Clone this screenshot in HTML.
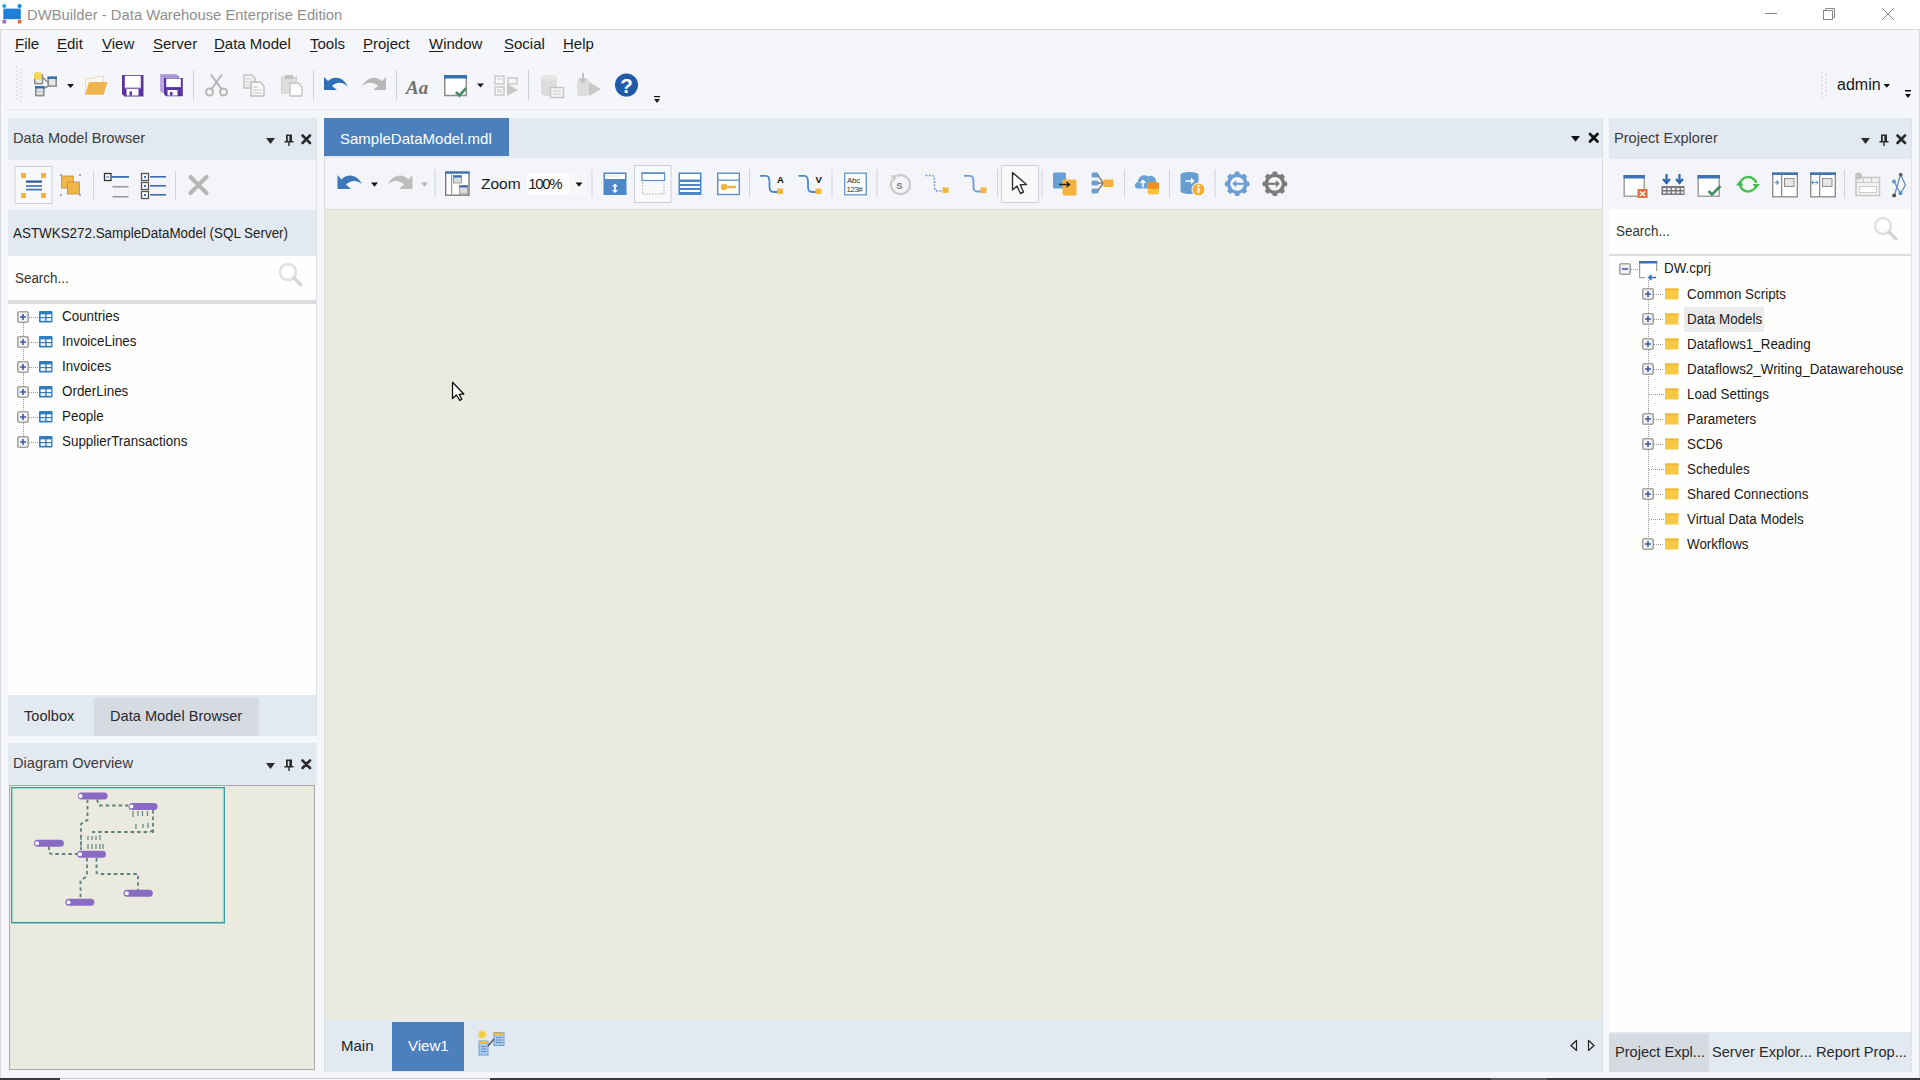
<!DOCTYPE html>
<html><head><meta charset="utf-8">
<style>
*{box-sizing:border-box;margin:0;padding:0}
html,body{width:1920px;height:1080px;overflow:hidden}
body{position:relative;background:#f4f6f9;font-family:"Liberation Sans",sans-serif;color:#1e1e1e}
.a{position:absolute}
.t{position:absolute;white-space:nowrap;line-height:1}
#titlebar{left:0;top:0;width:1920px;height:30px;background:#fff;border-bottom:1px solid #d6d6d6}
.menu span{position:absolute;top:36px;font-size:15px;white-space:nowrap;line-height:1;color:#1b1b1b}
.menu u{text-decoration:underline;text-underline-offset:1.5px;text-decoration-thickness:1px}
.phdr{background:#e3e9f1}
.ptitle{font-size:14.6px;color:#3c3c3c}
.tree{font-size:15.5px;color:#1a1a1a;transform:scaleX(.8645);transform-origin:0 0}
.canvas{background:#ebeadf}
</style></head><body>
<div id="titlebar" class="a"></div>
<div class="t" style="left:27px;top:8px;font-size:14.8px;color:#8f8f8f">DWBuilder - Data Warehouse Enterprise Edition</div>


<!-- title icon -->
<svg class="a" style="left:0;top:0" width="26" height="29">
<rect x="3.3" y="8.6" width="17.5" height="10.6" fill="#1e80d8"/>
<circle cx="4.3" cy="6" r="2.1" fill="#27a6da"/><circle cx="19.6" cy="6" r="2.1" fill="#1b86d4"/>
<circle cx="4.3" cy="21.7" r="2.1" fill="#9b70c6"/><circle cx="19.6" cy="21.7" r="2.1" fill="#e2703a"/>
</svg>
<!-- window controls -->
<svg class="a" style="left:1750px;top:0" width="170" height="29">
<line x1="15" y1="13.5" x2="27" y2="13.5" stroke="#8a8a8a" stroke-width="1"/>
<rect x="73.5" y="10.5" width="9" height="9" fill="none" stroke="#8a8a8a"/>
<path d="M75.5 10.5 V8.5 H84.5 V17.5 H82.5" fill="none" stroke="#8a8a8a"/>
<path d="M132 8 L144 20 M144 8 L132 20" stroke="#8a8a8a" stroke-width="1"/>
</svg>
<!-- main toolbar -->
<div class="a" style="left:4px;top:109px;width:658px;height:1px;background:#e6e9ed"></div>
<svg class="a" style="left:0;top:60px" width="700" height="50">
<g fill="#c9ccd1">
<circle cx="17" cy="7" r=".8"/><circle cx="21" cy="9" r=".8"/><circle cx="17" cy="11" r=".8"/><circle cx="21" cy="13" r=".8"/><circle cx="17" cy="15" r=".8"/><circle cx="21" cy="17" r=".8"/><circle cx="17" cy="19" r=".8"/><circle cx="21" cy="21" r=".8"/><circle cx="17" cy="23" r=".8"/><circle cx="21" cy="25" r=".8"/><circle cx="17" cy="27" r=".8"/><circle cx="21" cy="29" r=".8"/><circle cx="17" cy="31" r=".8"/><circle cx="21" cy="33" r=".8"/><circle cx="17" cy="35" r=".8"/><circle cx="21" cy="37" r=".8"/><circle cx="17" cy="39" r=".8"/><circle cx="21" cy="41" r=".8"/>
</g>
<!-- new model icon at 34,12 -->
<g transform="translate(34,12)">
<path d="M7 4 L14 10.5 M14.5 14 L9.5 16.5" stroke="#8c8c8c" stroke-width="1.6" fill="none"/>
<rect x="0.8" y="3" width="7.6" height="8.6" fill="#efefef" stroke="#8c8c8c" stroke-width="1.6"/>
<circle cx="3.8" cy="4" r="4" fill="#f3d652"/>
<rect x="14.2" y="5.5" width="8" height="8.6" fill="#e6e6e6" stroke="#8c8c8c" stroke-width="1.6"/>
<rect x="13.5" y="4.5" width="9.5" height="2.5" fill="#3b6eae"/>
<rect x="1.8" y="15" width="8" height="8.6" fill="#e6e6e6" stroke="#8c8c8c" stroke-width="1.6"/>
<rect x="1" y="14" width="9.5" height="2.5" fill="#3b6eae"/>
<rect x="3" y="19" width="5.5" height="1" fill="#bdbdbd"/>
</g>
<path d="M67 24 H74 L70.5 28 Z" fill="#1a1a1a"/>
<!-- folder 85,76 -->
<g transform="translate(85,16)">
<path d="M0.5 18.5 V2.5 H9 L11 0.5 H18.5 V7" fill="#fdf8ea" stroke="#e3c993" stroke-width="1" stroke-dasharray="1.2 .8"/>
<path d="M0 18.7 L4 6 H22.5 L18.5 18.7 Z" fill="#f0b54e"/>
</g>
<!-- save 122,75 -->
<g transform="translate(122,15)">
<path d="M0 0 H21.5 V21.5 H2.5 L0 19 Z" fill="#5b32a2"/>
<rect x="2.8" y="0.8" width="16" height="12" fill="#fff"/>
<rect x="2.8" y="12.5" width="16" height="1" fill="#b9a6dc"/>
<rect x="4.5" y="14" width="12" height="6.5" fill="#fff"/>
<rect x="7.5" y="16.5" width="2.5" height="4" fill="#5b32a2"/>
</g>
<!-- save all 160,74 -->
<g transform="translate(160,14)">
<path d="M0 0 H16 L19 3 V19 H2 L0 17 Z" fill="#b8a8dc"/>
<rect x="2" y="1.5" width="17" height="2" fill="#a08fd0"/>
<path d="M4 4 H22.8 V22.3 H6 L4 20 Z" fill="#5b32a2"/>
<rect x="6.2" y="4.6" width="14.6" height="8.5" fill="#fff"/>
<rect x="7.5" y="16" width="10" height="5.5" fill="#fff"/>
<rect x="10" y="18" width="2.5" height="3.5" fill="#5b32a2"/>
</g>
<rect x="193" y="10" width="1" height="30" fill="#cfd3d8"/>
<!-- scissors 205,73 -->
<g transform="translate(205,13)" stroke="#b6b6b6" fill="none" stroke-width="2">
<circle cx="4.5" cy="19" r="3.5"/><circle cx="18.5" cy="19" r="3.5"/>
<path d="M6.5 16 L17 1.5 M16.5 16 L6 1.5"/>
</g>
<!-- copy 243,74 -->
<g transform="translate(243,14)">
<path d="M1 1 H9 L12 4 V14 H1 Z" fill="#f2f2f2" stroke="#c2c2c2" stroke-width="1.4"/>
<path d="M3 5 H8 M3 8 H10 M3 11 H8" stroke="#cfcfcf" stroke-width="1"/>
<path d="M8 8 H17 L21 12 V22 H8 Z" fill="#fafafa" stroke="#bdbdbd" stroke-width="1.4"/>
<path d="M10 13 H15 M10 16 H19 M10 19 H19" stroke="#c6c6c6" stroke-width="1.2"/>
</g>
<!-- paste 281,74 -->
<g transform="translate(281,14)">
<rect x="0.5" y="3" width="15" height="16" fill="#dedede" stroke="#d0d0d0"/>
<rect x="4" y="1" width="8" height="4" fill="#c4c4c4"/>
<path d="M9 9 H17 L21 13 V22 H9 Z" fill="#fdfdfd" stroke="#c2c2c2" stroke-width="1.4"/>
</g>
<rect x="313" y="10" width="1" height="30" fill="#cfd3d8"/>
<!-- undo 323,77 -->
<path d="M324 17 L324 30 L337 30 L332 26 C337 21 344 22 348 27 C344 17 334 15 328 21 Z" fill="#2f6db6"/>
<!-- redo 362,77 -->
<path d="M386 17 L386 30 L373 30 L378 26 C373 21 366 22 362 27 C366 17 376 15 382 21 Z" fill="#b8b8b8"/>
<rect x="396" y="10" width="1" height="30" fill="#cfd3d8"/>
<text x="406" y="34" font-family="Liberation Serif" font-style="italic" font-weight="bold" font-size="19" fill="#727272">Aa</text>
<!-- window check 444,76 -->
<g transform="translate(444,15)">
<rect x="0.8" y="1" width="21.5" height="19.5" fill="#fff" stroke="#8d8d8d" stroke-width="1.5"/>
<rect x="0" y="0" width="23" height="3.5" fill="#3a6fb2"/>
<path d="M12 17 L15.5 20.5 L22 13" stroke="#3f8c5e" stroke-width="2.6" fill="none"/>
</g>
<path d="M477 23.5 H484 L480.5 27.5 Z" fill="#1a1a1a"/>
<!-- gray flow 494,75 -->
<g transform="translate(494,15)" fill="none" stroke="#c7c7c7" stroke-width="1.4">
<rect x="1" y="1" width="9" height="8"/><rect x="1" y="12" width="9" height="8"/>
<rect x="14" y="3" width="9" height="6"/>
<path d="M3 4 H8 M3 15 H8 M3 17 H8" stroke-width="1"/>
<path d="M13 9 L24 15 L13 21 Z" fill="#c6c6c6" stroke="none"/>
</g>
<rect x="528" y="10" width="1" height="30" fill="#cfd3d8"/>
<!-- db gray 541,74 -->
<g transform="translate(541,14)">
<path d="M0 4 C0 0 16 0 16 4 V19 C16 23 0 23 0 19 Z" fill="#dcdcdc"/>
<ellipse cx="8" cy="4" rx="8" ry="3" fill="#e6e6e6"/>
<rect x="9.5" y="13.5" width="13" height="10" fill="#f4f4f4" stroke="#c4c4c4" stroke-width="1.4"/>
<path d="M12 17 H20 M12 20 H20" stroke="#cacaca"/>
</g>
<!-- load gray 577,73 -->
<g transform="translate(577,13)">
<path d="M0 8 C0 5 12 5 12 8 V21 C12 24 0 24 0 21 Z" fill="#dedede"/>
<path d="M6 0 V9 M2.5 5.5 L6 9 L9.5 5.5" stroke="#c2c2c2" stroke-width="2" fill="none"/>
<path d="M12 9 L24 16 L12 23 Z" fill="#c9c9c9"/>
</g>
<!-- help 615,73 -->
<circle cx="626.5" cy="25" r="11.5" fill="#1f5aa7"/>
<text x="626.5" y="32.5" text-anchor="middle" font-family="Liberation Sans" font-weight="bold" font-size="20.5" fill="#fff">?</text>
<path d="M654 36 H660 V37.3 H654 Z M654 39 H660 L657 43 Z" fill="#1a1a1a"/>
</svg>
<!-- admin -->
<svg class="a" style="left:1815px;top:60px" width="105" height="50">
<g fill="#cfd2d6"><circle cx="7" cy="13" r=".8"/><circle cx="11" cy="15" r=".8"/><circle cx="7" cy="17" r=".8"/><circle cx="11" cy="19" r=".8"/><circle cx="7" cy="21" r=".8"/><circle cx="11" cy="23" r=".8"/><circle cx="7" cy="25" r=".8"/><circle cx="11" cy="27" r=".8"/><circle cx="7" cy="29" r=".8"/><circle cx="11" cy="31" r=".8"/><circle cx="7" cy="33" r=".8"/><circle cx="11" cy="35" r=".8"/><circle cx="7" cy="37" r=".8"/></g>
<path d="M68.5 24 H75 L71.75 27.8 Z" fill="#111"/>
<path d="M90 30 H96 V31.5 H90 Z M90 34 H96 L93 38 Z" fill="#111"/>
</svg>
<div class="t" style="left:1837px;top:76.5px;font-size:16px;color:#1a1a1a">admin</div>

<div class="menu">
<span style="left:15px"><u>F</u>ile</span>
<span style="left:57px"><u>E</u>dit</span>
<span style="left:102px"><u>V</u>iew</span>
<span style="left:153px"><u>S</u>erver</span>
<span style="left:214px"><u>D</u>ata Model</span>
<span style="left:310px"><u>T</u>ools</span>
<span style="left:363px"><u>P</u>roject</span>
<span style="left:429px"><u>W</u>indow</span>
<span style="left:504px"><u>S</u>ocial</span>
<span style="left:563px"><u>H</u>elp</span>
</div>

<!-- left panel -->
<div class="a phdr" style="left:8px;top:118px;width:309px;height:42px"></div>
<div class="t ptitle" style="left:13px;top:131px">Data Model Browser</div>
<div class="a" style="left:8px;top:160px;width:309px;height:50px;background:#f3f5f8"></div>
<div class="a phdr" style="left:8px;top:210px;width:309px;height:46px"></div>
<div class="t tree" style="left:13px;top:225px;color:#222">ASTWKS272.SampleDataModel (SQL Server)</div>
<div class="a" style="left:8px;top:256px;width:309px;height:44px;background:#fefefd"></div>
<div class="t tree" style="left:15px;top:270px;color:#333">Search...</div>
<div class="a" style="left:8px;top:300px;width:309px;height:4px;background:#dcdcdc"></div>
<div class="a" style="left:8px;top:304px;width:309px;height:391px;background:#fefefd"></div>
<div class="a phdr" style="left:8px;top:695px;width:309px;height:41px"></div>
<div class="a" style="left:94px;top:698px;width:165px;height:38px;background:#d6dbe2"></div>
<div class="t" style="left:24px;top:709px;font-size:14.6px;color:#2a2a2a">Toolbox</div>
<div class="t" style="left:110px;top:709px;font-size:14.6px;color:#2a2a2a">Data Model Browser</div>

<div class="a phdr" style="left:8px;top:743px;width:309px;height:42px"></div>
<div class="t ptitle" style="left:13px;top:756px">Diagram Overview</div>
<div class="a canvas" style="left:9px;top:785px;width:306px;height:285px;border:1px solid #a9a9a9"></div>


<!-- left panel toolbar -->
<svg class="a" style="left:8px;top:160px" width="309" height="50">
<rect x="7" y="6.5" width="37" height="37" fill="#f8f9fb" stroke="#cdd1d6"/>
<g fill="#f3b53f"><rect x="13" y="13" width="5" height="5"/><rect x="33" y="13" width="5" height="5"/><rect x="13" y="33" width="5" height="5"/><rect x="33" y="33" width="5" height="5"/></g>
<rect x="18" y="20.5" width="16" height="2.2" fill="#2d5a94"/>
<rect x="18" y="25.2" width="16" height="1.6" fill="#3f6fae"/>
<rect x="18" y="28.8" width="16" height="1.6" fill="#3f6fae"/>
<!-- icon2 -->
<g transform="translate(52,14)">
<rect x="1.5" y="2" width="12" height="12" fill="#f0b648" stroke="#b9914a" stroke-width=".8"/>
<rect x="7.5" y="8" width="12" height="12" fill="#f0b648" stroke="#b9914a" stroke-width=".8"/>
<g fill="#555"><circle cx="1" cy="1" r=".8"/><circle cx="20" cy="1" r=".8"/><circle cx="1" cy="21" r=".8"/><circle cx="20" cy="21" r=".8"/></g>
</g>
<rect x="85" y="10.5" width="1" height="29" fill="#cfd3d8"/>
<!-- icon3 -->
<rect x="96.5" y="13.5" width="6.5" height="7" fill="#fff" stroke="#333" stroke-width="1.3"/>
<rect x="98" y="16.5" width="3.5" height="1" fill="#3f6fae"/>
<rect x="104" y="16" width="17" height="1.8" fill="#3f6fae"/>
<rect x="104.5" y="26" width="16" height="1.5" fill="#9a9a9a"/>
<rect x="104.5" y="36" width="16" height="1.5" fill="#9a9a9a"/>
<!-- icon4 -->
<g fill="#fff" stroke="#555" stroke-width="1.3"><rect x="133.5" y="13.5" width="7" height="7"/><rect x="133.5" y="22.5" width="7" height="7"/><rect x="133.5" y="31.5" width="7" height="7"/></g>
<g fill="#3f6fae"><rect x="136" y="16" width="2" height="2"/><rect x="136" y="25" width="2" height="2"/><rect x="136" y="34" width="2" height="2"/>
<rect x="142" y="16" width="16" height="1.6"/><rect x="142" y="25" width="16" height="1.6"/><rect x="142" y="34" width="16" height="1.6"/></g>
<rect x="167" y="10.5" width="1" height="29" fill="#cfd3d8"/>
<path d="M182.5 17 L198.5 33 M198.5 17 L182.5 33" stroke="#b7b7b7" stroke-width="4.2" stroke-linecap="round"/>
</svg>
<!-- left tree -->
<svg class="a" style="left:8px;top:304px" width="60" height="160">
<g fill="none" stroke="#9b9b9b" stroke-width="1" stroke-dasharray="1 1">
<path d="M15.5 19 V132"/>
<path d="M21 13.5 H30 M21 38.5 H30 M21 63.5 H30 M21 88.5 H30 M21 113.5 H30 M21 138.5 H30"/>
</g>
<g id="lt">
</g>
</svg>
<svg class="a" style="left:17px;top:311px" width="37" height="13">
<rect x="0.8" y="0.8" width="10.4" height="10.4" rx="1.5" fill="#f4f4f4" stroke="#a3a3a3" stroke-width="1.6"/>
<path d="M3 6 H9 M6 3 V9" stroke="#3e5aa2" stroke-width="1.6"/>
<rect x="22" y="0" width="13.5" height="11.5" rx="1" fill="#2f7cc0"/>
<rect x="23.6" y="3.4" width="4.6" height="2.6" fill="#fff"/><rect x="29.6" y="3.4" width="4.6" height="2.6" fill="#fff"/>
<rect x="23.6" y="7.2" width="4.6" height="2.6" fill="#fff"/><rect x="29.6" y="7.2" width="4.6" height="2.6" fill="#fff"/>
</svg>
<div class="t tree" style="left:62px;top:308px">Countries</div>
<svg class="a" style="left:17px;top:336px" width="37" height="13">
<rect x="0.8" y="0.8" width="10.4" height="10.4" rx="1.5" fill="#f4f4f4" stroke="#a3a3a3" stroke-width="1.6"/>
<path d="M3 6 H9 M6 3 V9" stroke="#3e5aa2" stroke-width="1.6"/>
<rect x="22" y="0" width="13.5" height="11.5" rx="1" fill="#2f7cc0"/>
<rect x="23.6" y="3.4" width="4.6" height="2.6" fill="#fff"/><rect x="29.6" y="3.4" width="4.6" height="2.6" fill="#fff"/>
<rect x="23.6" y="7.2" width="4.6" height="2.6" fill="#fff"/><rect x="29.6" y="7.2" width="4.6" height="2.6" fill="#fff"/>
</svg>
<div class="t tree" style="left:62px;top:333px">InvoiceLines</div>
<svg class="a" style="left:17px;top:361px" width="37" height="13">
<rect x="0.8" y="0.8" width="10.4" height="10.4" rx="1.5" fill="#f4f4f4" stroke="#a3a3a3" stroke-width="1.6"/>
<path d="M3 6 H9 M6 3 V9" stroke="#3e5aa2" stroke-width="1.6"/>
<rect x="22" y="0" width="13.5" height="11.5" rx="1" fill="#2f7cc0"/>
<rect x="23.6" y="3.4" width="4.6" height="2.6" fill="#fff"/><rect x="29.6" y="3.4" width="4.6" height="2.6" fill="#fff"/>
<rect x="23.6" y="7.2" width="4.6" height="2.6" fill="#fff"/><rect x="29.6" y="7.2" width="4.6" height="2.6" fill="#fff"/>
</svg>
<div class="t tree" style="left:62px;top:358px">Invoices</div>
<svg class="a" style="left:17px;top:386px" width="37" height="13">
<rect x="0.8" y="0.8" width="10.4" height="10.4" rx="1.5" fill="#f4f4f4" stroke="#a3a3a3" stroke-width="1.6"/>
<path d="M3 6 H9 M6 3 V9" stroke="#3e5aa2" stroke-width="1.6"/>
<rect x="22" y="0" width="13.5" height="11.5" rx="1" fill="#2f7cc0"/>
<rect x="23.6" y="3.4" width="4.6" height="2.6" fill="#fff"/><rect x="29.6" y="3.4" width="4.6" height="2.6" fill="#fff"/>
<rect x="23.6" y="7.2" width="4.6" height="2.6" fill="#fff"/><rect x="29.6" y="7.2" width="4.6" height="2.6" fill="#fff"/>
</svg>
<div class="t tree" style="left:62px;top:383px">OrderLines</div>
<svg class="a" style="left:17px;top:411px" width="37" height="13">
<rect x="0.8" y="0.8" width="10.4" height="10.4" rx="1.5" fill="#f4f4f4" stroke="#a3a3a3" stroke-width="1.6"/>
<path d="M3 6 H9 M6 3 V9" stroke="#3e5aa2" stroke-width="1.6"/>
<rect x="22" y="0" width="13.5" height="11.5" rx="1" fill="#2f7cc0"/>
<rect x="23.6" y="3.4" width="4.6" height="2.6" fill="#fff"/><rect x="29.6" y="3.4" width="4.6" height="2.6" fill="#fff"/>
<rect x="23.6" y="7.2" width="4.6" height="2.6" fill="#fff"/><rect x="29.6" y="7.2" width="4.6" height="2.6" fill="#fff"/>
</svg>
<div class="t tree" style="left:62px;top:408px">People</div>
<svg class="a" style="left:17px;top:436px" width="37" height="13">
<rect x="0.8" y="0.8" width="10.4" height="10.4" rx="1.5" fill="#f4f4f4" stroke="#a3a3a3" stroke-width="1.6"/>
<path d="M3 6 H9 M6 3 V9" stroke="#3e5aa2" stroke-width="1.6"/>
<rect x="22" y="0" width="13.5" height="11.5" rx="1" fill="#2f7cc0"/>
<rect x="23.6" y="3.4" width="4.6" height="2.6" fill="#fff"/><rect x="29.6" y="3.4" width="4.6" height="2.6" fill="#fff"/>
<rect x="23.6" y="7.2" width="4.6" height="2.6" fill="#fff"/><rect x="29.6" y="7.2" width="4.6" height="2.6" fill="#fff"/>
</svg>
<div class="t tree" style="left:62px;top:433px">SupplierTransactions</div>

<!-- document -->
<div class="a phdr" style="left:324px;top:118px;width:1278px;height:40px"></div>
<div class="a" style="left:324px;top:118px;width:185px;height:38px;background:#4b80bc"></div>
<div class="t" style="left:340px;top:131px;font-size:15px;color:#fff">SampleDataModel.mdl</div>
<div class="a" style="left:325px;top:158px;width:1277px;height:51px;background:#f3f5f8"></div>
<div class="a canvas" style="left:325px;top:209px;width:1277px;height:811px"></div>
<div class="a phdr" style="left:325px;top:1020px;width:1277px;height:52px"></div>
<div class="a" style="left:392px;top:1022px;width:72px;height:49px;background:#4b80bc"></div>
<div class="t" style="left:341px;top:1038px;font-size:15px;color:#222">Main</div>
<div class="t" style="left:408px;top:1038px;font-size:15px;color:#fff">View1</div>


<!-- doc toolbar -->
<svg class="a" style="left:325px;top:158px" width="1000" height="51">
<!-- undo -->
<path d="M12.5 17 L12.5 31 L26 31 L21 26.5 C26 21.5 32 22 37 26 C32 16 22 15 16.5 21.5 Z" fill="#3f77b8"/>
<path d="M46 24.5 H53 L49.5 28.7 Z" fill="#111"/>
<path d="M87.5 17 L87.5 31 L74 31 L79 26.5 C74 21.5 68 22 63 26 C68 16 78 15 83.5 21.5 Z" fill="#bdbdbd"/>
<path d="M96 24.5 H103 L99.5 28.7 Z" fill="#b5b5b5"/>
<rect x="109.5" y="11.5" width="1" height="28" fill="#cfd3d8"/>
<!-- layout icon 445-470, 171.6-196 -->
<g transform="translate(120,13.5)">
<rect x="0.7" y="0.7" width="23.3" height="23" fill="#fff" stroke="#7a7a7a" stroke-width="1.4"/>
<rect x="0" y="0" width="24.5" height="2.2" fill="#3a6fb2"/>
<rect x="6" y="2" width="1.2" height="22" fill="#9a9a9a"/>
<rect x="8.5" y="4" width="8" height="7.5" fill="#dcdcdc" stroke="#8a8a8a" stroke-width=".8"/>
<rect x="8.5" y="4" width="8" height="2" fill="#3a6fb2"/>
<rect x="14.5" y="14" width="8" height="8.5" fill="#dcdcdc" stroke="#8a8a8a" stroke-width=".8"/>
<rect x="14.5" y="14" width="8" height="2" fill="#3a6fb2"/>
</g>
<text x="156" y="31" font-family="Liberation Sans" font-size="15.5" fill="#1a1a1a">Zoom</text>
<rect x="202" y="15" width="59" height="21.5" fill="#fdfdfd"/>
<rect x="244" y="15" width="17" height="21.5" fill="#f6f7f9"/>
<text x="203.2" y="31" font-family="Liberation Sans" font-size="15" fill="#1a1a1a" letter-spacing="-1.3">100%</text>
<path d="M250.5 24.5 H257.5 L254 28.7 Z" fill="#111"/>
<rect x="266.5" y="11.5" width="1" height="28" fill="#cfd3d8"/>
<!-- A: 603.6-626.3 -> local 278.6 -->
<g transform="translate(278.5,14.5)">
<rect x="0" y="0" width="23" height="22.5" fill="#4d87c7"/>
<rect x="1.5" y="1.5" width="20" height="6" fill="#fff"/>
<rect x="1.5" y="6.5" width="20" height="1.5" fill="#4d87c7"/>
<rect x="3" y="3" width="13" height="1" fill="#cfdff0"/>
<path d="M11.5 11 L8.5 14 H10.7 V17.5 H8.5 L11.5 20.5 L14.5 17.5 H12.3 V14 H14.5 Z" fill="#fff"/>
</g>
<rect x="309.5" y="7.5" width="36.5" height="37" fill="#f8f9fb" stroke="#cdd1d6"/>
<g transform="translate(316.5,14.5)">
<rect x="0.5" y="0.5" width="22.5" height="7.5" fill="#fff" stroke="#5d8fca" stroke-width="1.2"/>
<rect x="0" y="0" width="23.5" height="1.5" fill="#5d8fca"/>
<path d="M1 10 V21.5 H22.5 V10" fill="none" stroke="#b0b0b0" stroke-width="1" stroke-dasharray="1.5 1.5"/>
</g>
<g transform="translate(353.5,14.5)">
<rect x="0" y="0" width="23" height="22.5" fill="#4d87c7"/>
<rect x="1.5" y="1.5" width="20" height="5.5" fill="#fff"/>
<rect x="1.5" y="9.5" width="20" height="2" fill="#fff"/>
<rect x="1.5" y="13.5" width="20" height="2" fill="#fff"/>
<rect x="1.5" y="17.5" width="20" height="2" fill="#fff"/>
</g>
<g transform="translate(392,14.5)">
<rect x="0.7" y="0.7" width="21.6" height="21.3" fill="#fff" stroke="#5d8fca" stroke-width="1.4"/>
<rect x="0" y="7" width="23" height="1.3" fill="#5d8fca"/>
<circle cx="7" cy="14.5" r="3.2" fill="#f0b63d"/>
<rect x="9" y="13.3" width="10" height="2.4" fill="#f0b63d"/>
</g>
<rect x="424" y="11.5" width="1" height="28" fill="#cfd3d8"/>
<!-- line A 760-784 -->
<g transform="translate(435,16)">
<path d="M0 1.8 H6 C9 1.8 9.5 4 9.5 8 V12 C9.5 16 10 18 14 18 H18" fill="none" stroke="#4d87c7" stroke-width="1.8"/>
<rect x="17" y="14.5" width="6" height="5.5" fill="#f0b63d"/>
<text x="17" y="9" font-family="Liberation Sans" font-weight="bold" font-size="9.5" fill="#111">A</text>
</g>
<g transform="translate(473.5,16)">
<path d="M0 1.8 H6 C9 1.8 9.5 4 9.5 8 V12 C9.5 16 10 18 14 18 H18" fill="none" stroke="#4d87c7" stroke-width="1.8"/>
<rect x="17" y="14.5" width="6" height="5.5" fill="#f0b63d"/>
<text x="17" y="9" font-family="Liberation Sans" font-weight="bold" font-size="9.5" fill="#111">V</text>
</g>
<rect x="506.5" y="11.5" width="1" height="28" fill="#cfd3d8"/>
<g transform="translate(519,14.5)">
<rect x="0.7" y="0.7" width="21.6" height="21.6" fill="#fff" stroke="#6d9ad0" stroke-width="1.4"/>
<text x="3" y="10" font-family="Liberation Sans" font-size="8" fill="#333" letter-spacing="-0.3">Abc</text>
<text x="2.5" y="19" font-family="Liberation Sans" font-size="8" fill="#333" letter-spacing="-0.5">123#</text>
</g>
<rect x="551.5" y="11.5" width="1" height="28" fill="#cfd3d8"/>
<!-- S circle 888.6-911.3 -->
<g transform="translate(563.5,15.5)">
<path d="M4 6 A9.5 9.5 0 1 0 8 2.5" fill="none" stroke="#cacaca" stroke-width="2.2"/>
<path d="M2 2 L8 1.5 L6 8 Z" fill="#cacaca"/>
<text x="8" y="15" font-family="Liberation Sans" font-weight="bold" font-size="9" fill="#777">S</text>
</g>
<!-- dotted line -->
<g transform="translate(600.5,16)">
<path d="M0 1.5 H6 C8.5 1.5 9 3 9 7 V12 C9 16 10 17 13 17 H18" fill="none" stroke="#6d9ad0" stroke-width="1.6" stroke-dasharray="1.8 1.5"/>
<rect x="17" y="13.5" width="6" height="5.5" fill="#f0b63d"/>
</g>
<g transform="translate(639,16)">
<path d="M0 1.8 H6 C9 1.8 9.5 4 9.5 8 V12 C9.5 16 10 17.5 14 17.5 H18" fill="none" stroke="#6d9ad0" stroke-width="1.8"/>
<rect x="16.5" y="13.5" width="6" height="5.5" fill="#f0b63d"/>
</g>
<rect x="672" y="11.5" width="1" height="28" fill="#cfd3d8"/>
<rect x="676.5" y="7.5" width="37" height="37" fill="#f8f9fb" stroke="#cdd1d6"/>
<path d="M687.5 14.5 L687.5 32 L692 28 L695.5 35.5 L698.5 34 L695.2 26.8 L701.5 26.5 Z" fill="#fff" stroke="#333" stroke-width="1.4" stroke-linejoin="round"/>
<rect x="716.5" y="11.5" width="1" height="28" fill="#cfd3d8"/>
<!-- blue/orange 1053-1076.6 -->
<g transform="translate(728,14.5)">
<rect x="0" y="0" width="13" height="16" rx="1.5" fill="#67a0d6"/>
<rect x="9.5" y="7" width="14" height="16" rx="1.5" fill="#f4b33e"/>
<path d="M6 12 H16 M13.5 9.5 L16.5 12 L13.5 14.5" stroke="#222" stroke-width="1.5" fill="none"/>
</g>
<!-- flow icon 1091.5-1113 -->
<g transform="translate(766.5,15)">
<rect x="0" y="-0.5" width="7" height="5" rx="1.5" fill="#6aa0d6"/>
<rect x="0" y="7.5" width="7" height="5" rx="1.5" fill="#6aa0d6"/>
<rect x="0" y="15.5" width="7" height="5" rx="1.5" fill="#6aa0d6"/>
<path d="M6 2 L12 10 M6 10 H12 M6 18 L12 10" stroke="#777" stroke-width="1.3"/>
<rect x="12" y="6.5" width="10" height="7.5" fill="#f4b33e"/>
</g>
<rect x="799" y="11.5" width="1" height="28" fill="#cfd3d8"/>
<!-- cloud db 1135-1159 -->
<g transform="translate(810,14.5)">
<path d="M2.5 16 C-1 16 -1 10 3 9.5 C3 4 9 1 13 4 C16 2 21 4 21 9 L21 16 Z" fill="#6aa1d6"/>
<path d="M8 15 V8 M5.5 10.5 L8 8 L10.5 10.5" stroke="#fff" stroke-width="1.5" fill="none"/>
<path d="M12.5 11 C12.5 9 24 9 24 11 V20.5 C24 22.5 12.5 22.5 12.5 20.5 Z" fill="#f7c23e"/>
<path d="M12.5 11 C12.5 9 24 9 24 11 V15 C24 17 12.5 17 12.5 15 Z" fill="#ef8f1d"/>
</g>
<rect x="844" y="11.5" width="1" height="28" fill="#cfd3d8"/>
<!-- db info 1180.8-1205 -->
<g transform="translate(855.5,14)">
<path d="M0 3 C0 -1 18 -1 18 3 V19 C18 23 0 23 0 19 Z" fill="#669dd2"/>
<path d="M5 9 H13 M10.5 6.5 L13 9 L10.5 11.5" stroke="#fff" stroke-width="1.5" fill="none"/>
<circle cx="18" cy="17.5" r="6.5" fill="#f4ad36" stroke="#fff" stroke-width="1"/>
<rect x="17" y="16" width="2" height="5" fill="#fff"/><rect x="17" y="13" width="2" height="2" fill="#fff"/>
</g>
<rect x="889.5" y="11.5" width="1" height="28" fill="#cfd3d8"/>
<!-- blue gear 1225-1249.5 -->
<g transform="translate(912.2,25.8)"><g fill="#6a9fd5"><rect x="-2.4" y="-12.3" width="4.8" height="5" rx="1.3" transform="rotate(0)"/><rect x="-2.4" y="-12.3" width="4.8" height="5" rx="1.3" transform="rotate(45)"/><rect x="-2.4" y="-12.3" width="4.8" height="5" rx="1.3" transform="rotate(90)"/><rect x="-2.4" y="-12.3" width="4.8" height="5" rx="1.3" transform="rotate(135)"/><rect x="-2.4" y="-12.3" width="4.8" height="5" rx="1.3" transform="rotate(180)"/><rect x="-2.4" y="-12.3" width="4.8" height="5" rx="1.3" transform="rotate(225)"/><rect x="-2.4" y="-12.3" width="4.8" height="5" rx="1.3" transform="rotate(270)"/><rect x="-2.4" y="-12.3" width="4.8" height="5" rx="1.3" transform="rotate(315)"/></g><circle r="8.6" fill="none" stroke="#6a9fd5" stroke-width="3.4"/><path d="M7 0 H-3.5" stroke="#6a9fd5" stroke-width="2.2"/><path d="M-5 0 L-1 -3.8 V3.8 Z" fill="#6a9fd5"/></g>
<g transform="translate(949.9,25.8)"><g fill="#7c7c7c"><rect x="-2.4" y="-12.3" width="4.8" height="5" rx="1.3" transform="rotate(0)"/><rect x="-2.4" y="-12.3" width="4.8" height="5" rx="1.3" transform="rotate(45)"/><rect x="-2.4" y="-12.3" width="4.8" height="5" rx="1.3" transform="rotate(90)"/><rect x="-2.4" y="-12.3" width="4.8" height="5" rx="1.3" transform="rotate(135)"/><rect x="-2.4" y="-12.3" width="4.8" height="5" rx="1.3" transform="rotate(180)"/><rect x="-2.4" y="-12.3" width="4.8" height="5" rx="1.3" transform="rotate(225)"/><rect x="-2.4" y="-12.3" width="4.8" height="5" rx="1.3" transform="rotate(270)"/><rect x="-2.4" y="-12.3" width="4.8" height="5" rx="1.3" transform="rotate(315)"/></g><circle r="8.6" fill="none" stroke="#7c7c7c" stroke-width="3.4"/><path d="M-7 0 H3.5" stroke="#7c7c7c" stroke-width="2.2"/><path d="M5 0 L1 -3.8 V3.8 Z" fill="#7c7c7c"/></g>
</svg>

<!-- right -->
<div class="a phdr" style="left:1609px;top:118px;width:303px;height:41px"></div>
<div class="t ptitle" style="left:1614px;top:131px">Project Explorer</div>
<div class="a" style="left:1609px;top:159px;width:303px;height:50px;background:#f3f5f8"></div>
<div class="a" style="left:1609px;top:209px;width:303px;height:44px;background:#fefefd"></div>
<div class="t tree" style="left:1616px;top:223px;color:#333">Search...</div>
<div class="a" style="left:1609px;top:254px;width:303px;height:2px;background:#dedede"></div>
<div class="a" style="left:1609px;top:256px;width:303px;height:776px;background:#fefefd"></div>
<div class="a phdr" style="left:1609px;top:1032px;width:303px;height:40px"></div>
<div class="a" style="left:1609px;top:1034px;width:100px;height:38px;background:#d6dbe2"></div>
<div class="t" style="left:1615px;top:1045px;font-size:14.6px;color:#2a2a2a">Project Expl...</div>
<div class="t" style="left:1712px;top:1045px;font-size:14.6px;color:#2a2a2a">Server Explor...</div>
<div class="t" style="left:1816px;top:1045px;font-size:14.6px;color:#2a2a2a">Report Prop...</div>


<!-- right toolbar -->
<svg class="a" style="left:1609px;top:158px" width="303" height="51">
<g transform="translate(14.5,17)">
<rect x="0.7" y="0.7" width="20" height="20.5" fill="#fff" stroke="#9a9a9a" stroke-width="1.4"/>
<rect x="0" y="0" width="21.5" height="3.5" fill="#3d72b4"/>
<rect x="14" y="14" width="10" height="9" fill="#e5703d"/>
<path d="M16.5 16.5 L21.5 21 M21.5 16.5 L16.5 21" stroke="#fff" stroke-width="1.5"/>
</g>
<g transform="translate(52,16)">
<path d="M5.5 0 V8 M2 5 L5.5 9 L9 5 M18.5 0 V8 M15 5 L18.5 9 L22 5" stroke="#2f66b0" stroke-width="2.2" fill="none"/>
<rect x="0.5" y="12" width="23" height="9" fill="#7a7a7a"/>
<g fill="#eee"><rect x="2" y="14" width="3" height="2"/><rect x="6.5" y="14" width="3" height="2"/><rect x="11" y="14" width="3" height="2"/><rect x="15.5" y="14" width="3" height="2"/><rect x="20" y="14" width="2.5" height="2"/>
<rect x="2" y="17.5" width="3" height="2"/><rect x="6.5" y="17.5" width="3" height="2"/><rect x="11" y="17.5" width="3" height="2"/><rect x="15.5" y="17.5" width="3" height="2"/><rect x="20" y="17.5" width="2.5" height="2"/></g>
</g>
<g transform="translate(88.5,17)">
<rect x="0.7" y="0.7" width="21" height="20.5" fill="#fff" stroke="#9a9a9a" stroke-width="1.4"/>
<rect x="0" y="0" width="22.5" height="3.5" fill="#3d72b4"/>
<path d="M11 16 L14.5 19.5 L23 11" stroke="#3f8c5e" stroke-width="2.6" fill="none"/>
</g>
<!-- refresh 1736-1760.5 -->
<g transform="translate(139,26.5)" fill="none" stroke="#46c34f" stroke-width="2.4">
<path d="M-8.3 1 A8.5 8.5 0 0 1 8.3 -1.5"/>
<path d="M8.3 1 A8.5 8.5 0 0 1 -8.3 -1"/>
</g>
<path d="M143.5 26 L151 26 L147.2 30.5 Z M127 27.5 L134.5 27.5 L130.8 22.5 Z" fill="#3fbd49"/>
<g transform="translate(163,14.5)">
<rect x="0.7" y="0.7" width="24.6" height="23.6" fill="#fff" stroke="#8f8f8f" stroke-width="1.4"/>
<rect x="0" y="0" width="26" height="2.5" fill="#3d72b4"/>
<rect x="9" y="2" width="1.3" height="22" fill="#8f8f8f"/>
<rect x="12.5" y="6" width="9.5" height="8" fill="#e6e6e6" stroke="#8f8f8f" stroke-width="1"/>
<path d="M2.5 10 H6 M4.5 8 L6.5 10 L4.5 12" stroke="#5b92cd" stroke-width="1.2" fill="none"/>
</g>
<g transform="translate(201,14.5)">
<rect x="0.7" y="0.7" width="24.6" height="23.6" fill="#fff" stroke="#8f8f8f" stroke-width="1.4"/>
<rect x="0" y="0" width="26" height="2.5" fill="#3d72b4"/>
<rect x="9" y="2" width="1.3" height="22" fill="#8f8f8f"/>
<rect x="12.5" y="6" width="9.5" height="8" fill="#e6e6e6" stroke="#8f8f8f" stroke-width="1"/>
<path d="M1.5 10 H8 M3.5 8 L1.5 10 L3.5 12 M6 8 L8 10 L6 12" stroke="#5b92cd" stroke-width="1" fill="none"/>
</g>
<rect x="235" y="12" width="1" height="28.5" fill="#cfd3d8"/>
<g transform="translate(245.5,14.5)">
<rect x="1.5" y="5" width="23.5" height="18" fill="#f3f3f3" stroke="#c8c8c8" stroke-width="1.6"/>
<path d="M2 10 H25 M9 5 V10 M17 5 V10" stroke="#c8c8c8" stroke-width="1.2"/>
<rect x="5" y="14" width="17" height="6" fill="#fff" stroke="#cbcbcb" stroke-width="1"/>
<circle cx="4" cy="3.5" r="3.5" fill="#c2c2c2"/>
</g>
<g transform="translate(282.5,14.5)">
<path d="M9 2 L3 23 M9 2 L14 12.5 L9 21 M2.5 9 L9 21" stroke="#6a8fbf" stroke-width="1.3" fill="none"/>
<circle cx="9.2" cy="2.2" r="2" fill="#666"/><circle cx="2.5" cy="9" r="2" fill="#5b92cd"/><circle cx="9" cy="20.8" r="2" fill="#5b92cd"/><circle cx="2.6" cy="23" r="2" fill="#555"/>
</g>
</svg>
<!-- right tree -->
<svg class="a" style="left:1609px;top:256px" width="80" height="300">
<g fill="none" stroke="#9b9b9b" stroke-width="1" stroke-dasharray="1 1">
<path d="M39.5 24 V282"/>
<path d="M22 13.5 H31"/>
<path d="M45 38.5 H55 M45 63.5 H55 M45 88.5 H55 M45 113.5 H55 M40 138.5 H55 M45 163.5 H55 M45 188.5 H55 M40 213.5 H55 M45 238.5 H55 M40 263.5 H55 M45 288.5 H55"/>
</g>
<rect x="10.8" y="7.8" width="10.4" height="10.4" rx="1.5" fill="#f4f4f4" stroke="#a3a3a3" stroke-width="1.6"/>
<path d="M13 13 H19" stroke="#3e5aa2" stroke-width="1.6"/>
<!-- project icon -->
<g transform="translate(30,5)">
<rect x="0.6" y="0.6" width="17" height="16" fill="#fff" stroke="#a0a0a0" stroke-width="1.2"/>
<rect x="0" y="0" width="18.2" height="2.5" fill="#3d72b4"/>
<rect x="6" y="10" width="12" height="8" fill="#fdfdfb"/>
<path d="M17 16.5 H10 M12.5 14 L10 16.5 L12.5 19" stroke="#2f6cb5" stroke-width="1.6" fill="none"/>
</g>
</svg>
<div class="t tree" style="left:1664px;top:260px">DW.cprj</div>
<svg class="a" style="left:1641px;top:287px" width="40" height="14"><rect x="1.8" y="1.8" width="10.4" height="10.4" rx="1.5" fill="#f4f4f4" stroke="#a3a3a3" stroke-width="1.6"/><path d="M4 7 H10 M7 4 V10" stroke="#3e5aa2" stroke-width="1.6"/><rect x="24" y="1.5" width="13.5" height="11" fill="#f7c843"/><rect x="24" y="1.5" width="13.5" height="2" fill="#f0b93a"/></svg>
<div class="t tree" style="left:1687px;top:286px">Common Scripts</div>
<div class="a" style="left:1684px;top:307px;width:80px;height:25px;background:#ebebeb"></div>
<svg class="a" style="left:1641px;top:312px" width="40" height="14"><rect x="1.8" y="1.8" width="10.4" height="10.4" rx="1.5" fill="#f4f4f4" stroke="#a3a3a3" stroke-width="1.6"/><path d="M4 7 H10 M7 4 V10" stroke="#3e5aa2" stroke-width="1.6"/><rect x="24" y="1.5" width="13.5" height="11" fill="#f7c843"/><rect x="24" y="1.5" width="13.5" height="2" fill="#f0b93a"/></svg>
<div class="t tree" style="left:1687px;top:311px">Data Models</div>
<svg class="a" style="left:1641px;top:337px" width="40" height="14"><rect x="1.8" y="1.8" width="10.4" height="10.4" rx="1.5" fill="#f4f4f4" stroke="#a3a3a3" stroke-width="1.6"/><path d="M4 7 H10 M7 4 V10" stroke="#3e5aa2" stroke-width="1.6"/><rect x="24" y="1.5" width="13.5" height="11" fill="#f7c843"/><rect x="24" y="1.5" width="13.5" height="2" fill="#f0b93a"/></svg>
<div class="t tree" style="left:1687px;top:336px">Dataflows1_Reading</div>
<svg class="a" style="left:1641px;top:362px" width="40" height="14"><rect x="1.8" y="1.8" width="10.4" height="10.4" rx="1.5" fill="#f4f4f4" stroke="#a3a3a3" stroke-width="1.6"/><path d="M4 7 H10 M7 4 V10" stroke="#3e5aa2" stroke-width="1.6"/><rect x="24" y="1.5" width="13.5" height="11" fill="#f7c843"/><rect x="24" y="1.5" width="13.5" height="2" fill="#f0b93a"/></svg>
<div class="t tree" style="left:1687px;top:361px">Dataflows2_Writing_Datawarehouse</div>
<svg class="a" style="left:1641px;top:387px" width="40" height="14"><rect x="24" y="1.5" width="13.5" height="11" fill="#f7c843"/><rect x="24" y="1.5" width="13.5" height="2" fill="#f0b93a"/></svg>
<div class="t tree" style="left:1687px;top:386px">Load Settings</div>
<svg class="a" style="left:1641px;top:412px" width="40" height="14"><rect x="1.8" y="1.8" width="10.4" height="10.4" rx="1.5" fill="#f4f4f4" stroke="#a3a3a3" stroke-width="1.6"/><path d="M4 7 H10 M7 4 V10" stroke="#3e5aa2" stroke-width="1.6"/><rect x="24" y="1.5" width="13.5" height="11" fill="#f7c843"/><rect x="24" y="1.5" width="13.5" height="2" fill="#f0b93a"/></svg>
<div class="t tree" style="left:1687px;top:411px">Parameters</div>
<svg class="a" style="left:1641px;top:437px" width="40" height="14"><rect x="1.8" y="1.8" width="10.4" height="10.4" rx="1.5" fill="#f4f4f4" stroke="#a3a3a3" stroke-width="1.6"/><path d="M4 7 H10 M7 4 V10" stroke="#3e5aa2" stroke-width="1.6"/><rect x="24" y="1.5" width="13.5" height="11" fill="#f7c843"/><rect x="24" y="1.5" width="13.5" height="2" fill="#f0b93a"/></svg>
<div class="t tree" style="left:1687px;top:436px">SCD6</div>
<svg class="a" style="left:1641px;top:462px" width="40" height="14"><rect x="24" y="1.5" width="13.5" height="11" fill="#f7c843"/><rect x="24" y="1.5" width="13.5" height="2" fill="#f0b93a"/></svg>
<div class="t tree" style="left:1687px;top:461px">Schedules</div>
<svg class="a" style="left:1641px;top:487px" width="40" height="14"><rect x="1.8" y="1.8" width="10.4" height="10.4" rx="1.5" fill="#f4f4f4" stroke="#a3a3a3" stroke-width="1.6"/><path d="M4 7 H10 M7 4 V10" stroke="#3e5aa2" stroke-width="1.6"/><rect x="24" y="1.5" width="13.5" height="11" fill="#f7c843"/><rect x="24" y="1.5" width="13.5" height="2" fill="#f0b93a"/></svg>
<div class="t tree" style="left:1687px;top:486px">Shared Connections</div>
<svg class="a" style="left:1641px;top:512px" width="40" height="14"><rect x="24" y="1.5" width="13.5" height="11" fill="#f7c843"/><rect x="24" y="1.5" width="13.5" height="2" fill="#f0b93a"/></svg>
<div class="t tree" style="left:1687px;top:511px">Virtual Data Models</div>
<svg class="a" style="left:1641px;top:537px" width="40" height="14"><rect x="1.8" y="1.8" width="10.4" height="10.4" rx="1.5" fill="#f4f4f4" stroke="#a3a3a3" stroke-width="1.6"/><path d="M4 7 H10 M7 4 V10" stroke="#3e5aa2" stroke-width="1.6"/><rect x="24" y="1.5" width="13.5" height="11" fill="#f7c843"/><rect x="24" y="1.5" width="13.5" height="2" fill="#f0b93a"/></svg>
<div class="t tree" style="left:1687px;top:536px">Workflows</div>


<!-- overview minimap -->
<svg class="a" style="left:0;top:780px" width="240" height="150">
<rect x="11.75" y="7.75" width="212.5" height="135" fill="none" stroke="#3f9c9a" stroke-width="1.5"/>
<rect x="13" y="9" width="210" height="132.5" fill="none" stroke="#c8ecea" stroke-width=".8"/>
<g fill="none" stroke="#5d8080" stroke-width="1.8" stroke-dasharray="3.5 3">
<path d="M87.5 19.5 V40 L81 44 V70"/>
<path d="M97 19.5 L99 25.5 H128"/>
<path d="M153 30 V53"/>
<path d="M153 50 L150 52 H92"/>
<path d="M49 66.5 V73 L52 74 H77"/>
<path d="M87 78 V96 L80.5 101 V118"/>
<path d="M96.5 78 V93 L99 94 H138 V110"/>
</g>
<g stroke="#6a8a88" stroke-width="1.3">
<path d="M133 31 V37 M138 31 V36 M142.5 31 V36 M147.5 31 V36"/>
<path d="M81 56 V60 M88 56 V60 M92 56 V60 M96 56 V60 M100 55 V60"/>
<path d="M81 64 V70 M88 64 V69 M92 64 V69 M96 64 V69 M100 64 V69 M103 64 V69"/>
<path d="M136 44 V49 M143 44 V48 M148 43 V48"/>
</g>
<g fill="#8a6bc4">
<rect x="77.8" y="12.5" width="29.8" height="7" rx="3.5"/>
<rect x="128.5" y="23" width="29.1" height="7" rx="3.5"/>
<rect x="34" y="59.7" width="29.9" height="7" rx="3.5"/>
<rect x="77" y="70.8" width="29" height="7" rx="3.5"/>
<rect x="123.6" y="109.7" width="29.2" height="7" rx="3.5"/>
<rect x="65.3" y="118.7" width="29.1" height="7" rx="3.5"/>
</g>
<g fill="#fff">
<circle cx="80.5" cy="16" r="2"/><circle cx="131.5" cy="26.5" r="2"/><circle cx="37" cy="63.2" r="2"/><circle cx="80" cy="74.3" r="2"/><circle cx="126.8" cy="113.2" r="2"/><circle cx="68.5" cy="122.2" r="2"/>
</g>
</svg>
<!-- doc bottom tab icon -->
<svg class="a" style="left:476px;top:1029px" width="32" height="28">
<g fill="#f2d33f"><circle cx="6" cy="5.5" r="3.2"/></g>
<g stroke="#f2c83a" stroke-width="1"><path d="M6 0.5 V10.5 M1 5.5 H11 M2.5 2 L9.5 9 M9.5 2 L2.5 9"/></g>
<rect x="3" y="12" width="9" height="14" fill="#a9cbee" stroke="#6e9ccf" stroke-width="1"/>
<rect x="3" y="12" width="9" height="2.5" fill="#f0b63d"/>
<path d="M5 17.5 H10 M5 20 H10 M5 22.5 H10" stroke="#4a7fbc" stroke-width=".8"/>
<rect x="18" y="3.5" width="10" height="13" fill="#a9cbee" stroke="#6e9ccf" stroke-width="1"/>
<rect x="18" y="3.5" width="10" height="2.5" fill="#f0b63d"/>
<path d="M20 8.5 H26 M20 11 H26 M20 13.5 H26" stroke="#4a7fbc" stroke-width=".8"/>
<path d="M12 17 L18 10" stroke="#555" stroke-width="1.5"/>
</svg>
<!-- doc scroll arrows -->
<svg class="a" style="left:1566px;top:1037px" width="32" height="18">
<path d="M10.5 3.5 V13.5 L5 8.5 Z" fill="none" stroke="#222" stroke-width="1.2" stroke-linejoin="round"/>
<path d="M22.5 3.5 V13.5 L28 8.5 Z" fill="none" stroke="#222" stroke-width="1.2" stroke-linejoin="round"/>
</svg>
<!-- window edges -->
<div class="a" style="left:0;top:29px;width:1px;height:1049px;background:#d9dbde"></div>
<div class="a" style="left:1919px;top:29px;width:1px;height:1049px;background:#d9dbde"></div>
<div class="a" style="left:0;top:1078px;width:60px;height:2px;background:#3a3a3a"></div>
<div class="a" style="left:490px;top:1078px;width:1430px;height:2px;background:#3a3a3a"></div>
<div class="a" style="left:60px;top:1078px;width:430px;height:1px;background:#cfcfcf"></div>
<div class="a" style="left:1491px;top:1078px;width:56px;height:2px;background:#5a5a5a"></div>
<!-- mouse cursor -->
<svg class="a" style="left:444px;top:376px" width="30" height="30">
<path d="M8.5 6.2 L8.5 22.5 L12.4 19 L15.8 24.4 L17.8 23.2 L15.2 18.4 L19.8 18 Z" fill="#fff" stroke="#111" stroke-width="1.3" stroke-linejoin="round"/>
</svg>
<!-- panel borders -->
<div class="a" style="left:316px;top:118px;width:1px;height:618px;background:#dfe3e8"></div>
<div class="a" style="left:324px;top:158px;width:1px;height:914px;background:#d9dde2"></div>
<div class="a" style="left:1602px;top:118px;width:1px;height:954px;background:#d9dde2"></div>
<div class="a" style="left:1911px;top:118px;width:1px;height:954px;background:#dfe3e8"></div>
<div class="a" style="left:325px;top:209px;width:1277px;height:1px;background:#dcdcd4"></div>
<!-- header buttons: left panel -->
<svg class="a" style="left:260px;top:128px" width="57" height="22">
<path d="M6 10 H15 L10.5 16 Z" fill="#2b2b2b"/>
<path d="M26 6.5 H32 V13 H26 Z M24.5 13 H33.5 V14.5 H24.5 Z M28.3 14.5 H29.7 V18 H28.3 Z" fill="#2b2b2b"/>
<path d="M26.6 6.5 V13" stroke="#e3e9f1" stroke-width="0"/>
<rect x="27.8" y="8" width="1.5" height="5" fill="#e3e9f1"/>
<path d="M42.5 7.5 L50 15 M50 7.5 L42.5 15" stroke="#2b2b2b" stroke-width="2.6" stroke-linecap="round"/>
</svg>
<svg class="a" style="left:260px;top:753px" width="57" height="22">
<path d="M6 10 H15 L10.5 16 Z" fill="#2b2b2b"/>
<path d="M26 6.5 H32 V13 H26 Z M24.5 13 H33.5 V14.5 H24.5 Z M28.3 14.5 H29.7 V18 H28.3 Z" fill="#2b2b2b"/>
<rect x="27.8" y="8" width="1.5" height="5" fill="#e3e9f1"/>
<path d="M42.5 7.5 L50 15 M50 7.5 L42.5 15" stroke="#2b2b2b" stroke-width="2.6" stroke-linecap="round"/>
</svg>
<svg class="a" style="left:1855px;top:128px" width="57" height="22">
<path d="M6 10 H15 L10.5 16 Z" fill="#2b2b2b"/>
<path d="M26 6.5 H32 V13 H26 Z M24.5 13 H33.5 V14.5 H24.5 Z M28.3 14.5 H29.7 V18 H28.3 Z" fill="#2b2b2b"/>
<rect x="27.8" y="8" width="1.5" height="5" fill="#e3e9f1"/>
<path d="M42.5 7.5 L50 15 M50 7.5 L42.5 15" stroke="#2b2b2b" stroke-width="2.6" stroke-linecap="round"/>
</svg>
<svg class="a" style="left:1560px;top:125px" width="45" height="25">
<path d="M11 11 H20 L15.5 16.8 Z" fill="#111"/>
<path d="M30 9 L37.5 16.5 M37.5 9 L30 16.5" stroke="#111" stroke-width="2.8" stroke-linecap="round"/>
</svg>

<!-- search magnifiers -->
<svg class="a" style="left:277px;top:262px" width="28" height="26">
<circle cx="11" cy="10" r="8" fill="none" stroke="#e0e0e0" stroke-width="2.4"/>
<path d="M17 16 L24 23" stroke="#d6d6d6" stroke-width="3.4" stroke-linecap="round"/>
</svg>
<svg class="a" style="left:1872px;top:216px" width="28" height="26">
<circle cx="11" cy="10" r="8" fill="none" stroke="#e0e0e0" stroke-width="2.4"/>
<path d="M17 16 L24 23" stroke="#d6d6d6" stroke-width="3.4" stroke-linecap="round"/>
</svg>

</body></html>
